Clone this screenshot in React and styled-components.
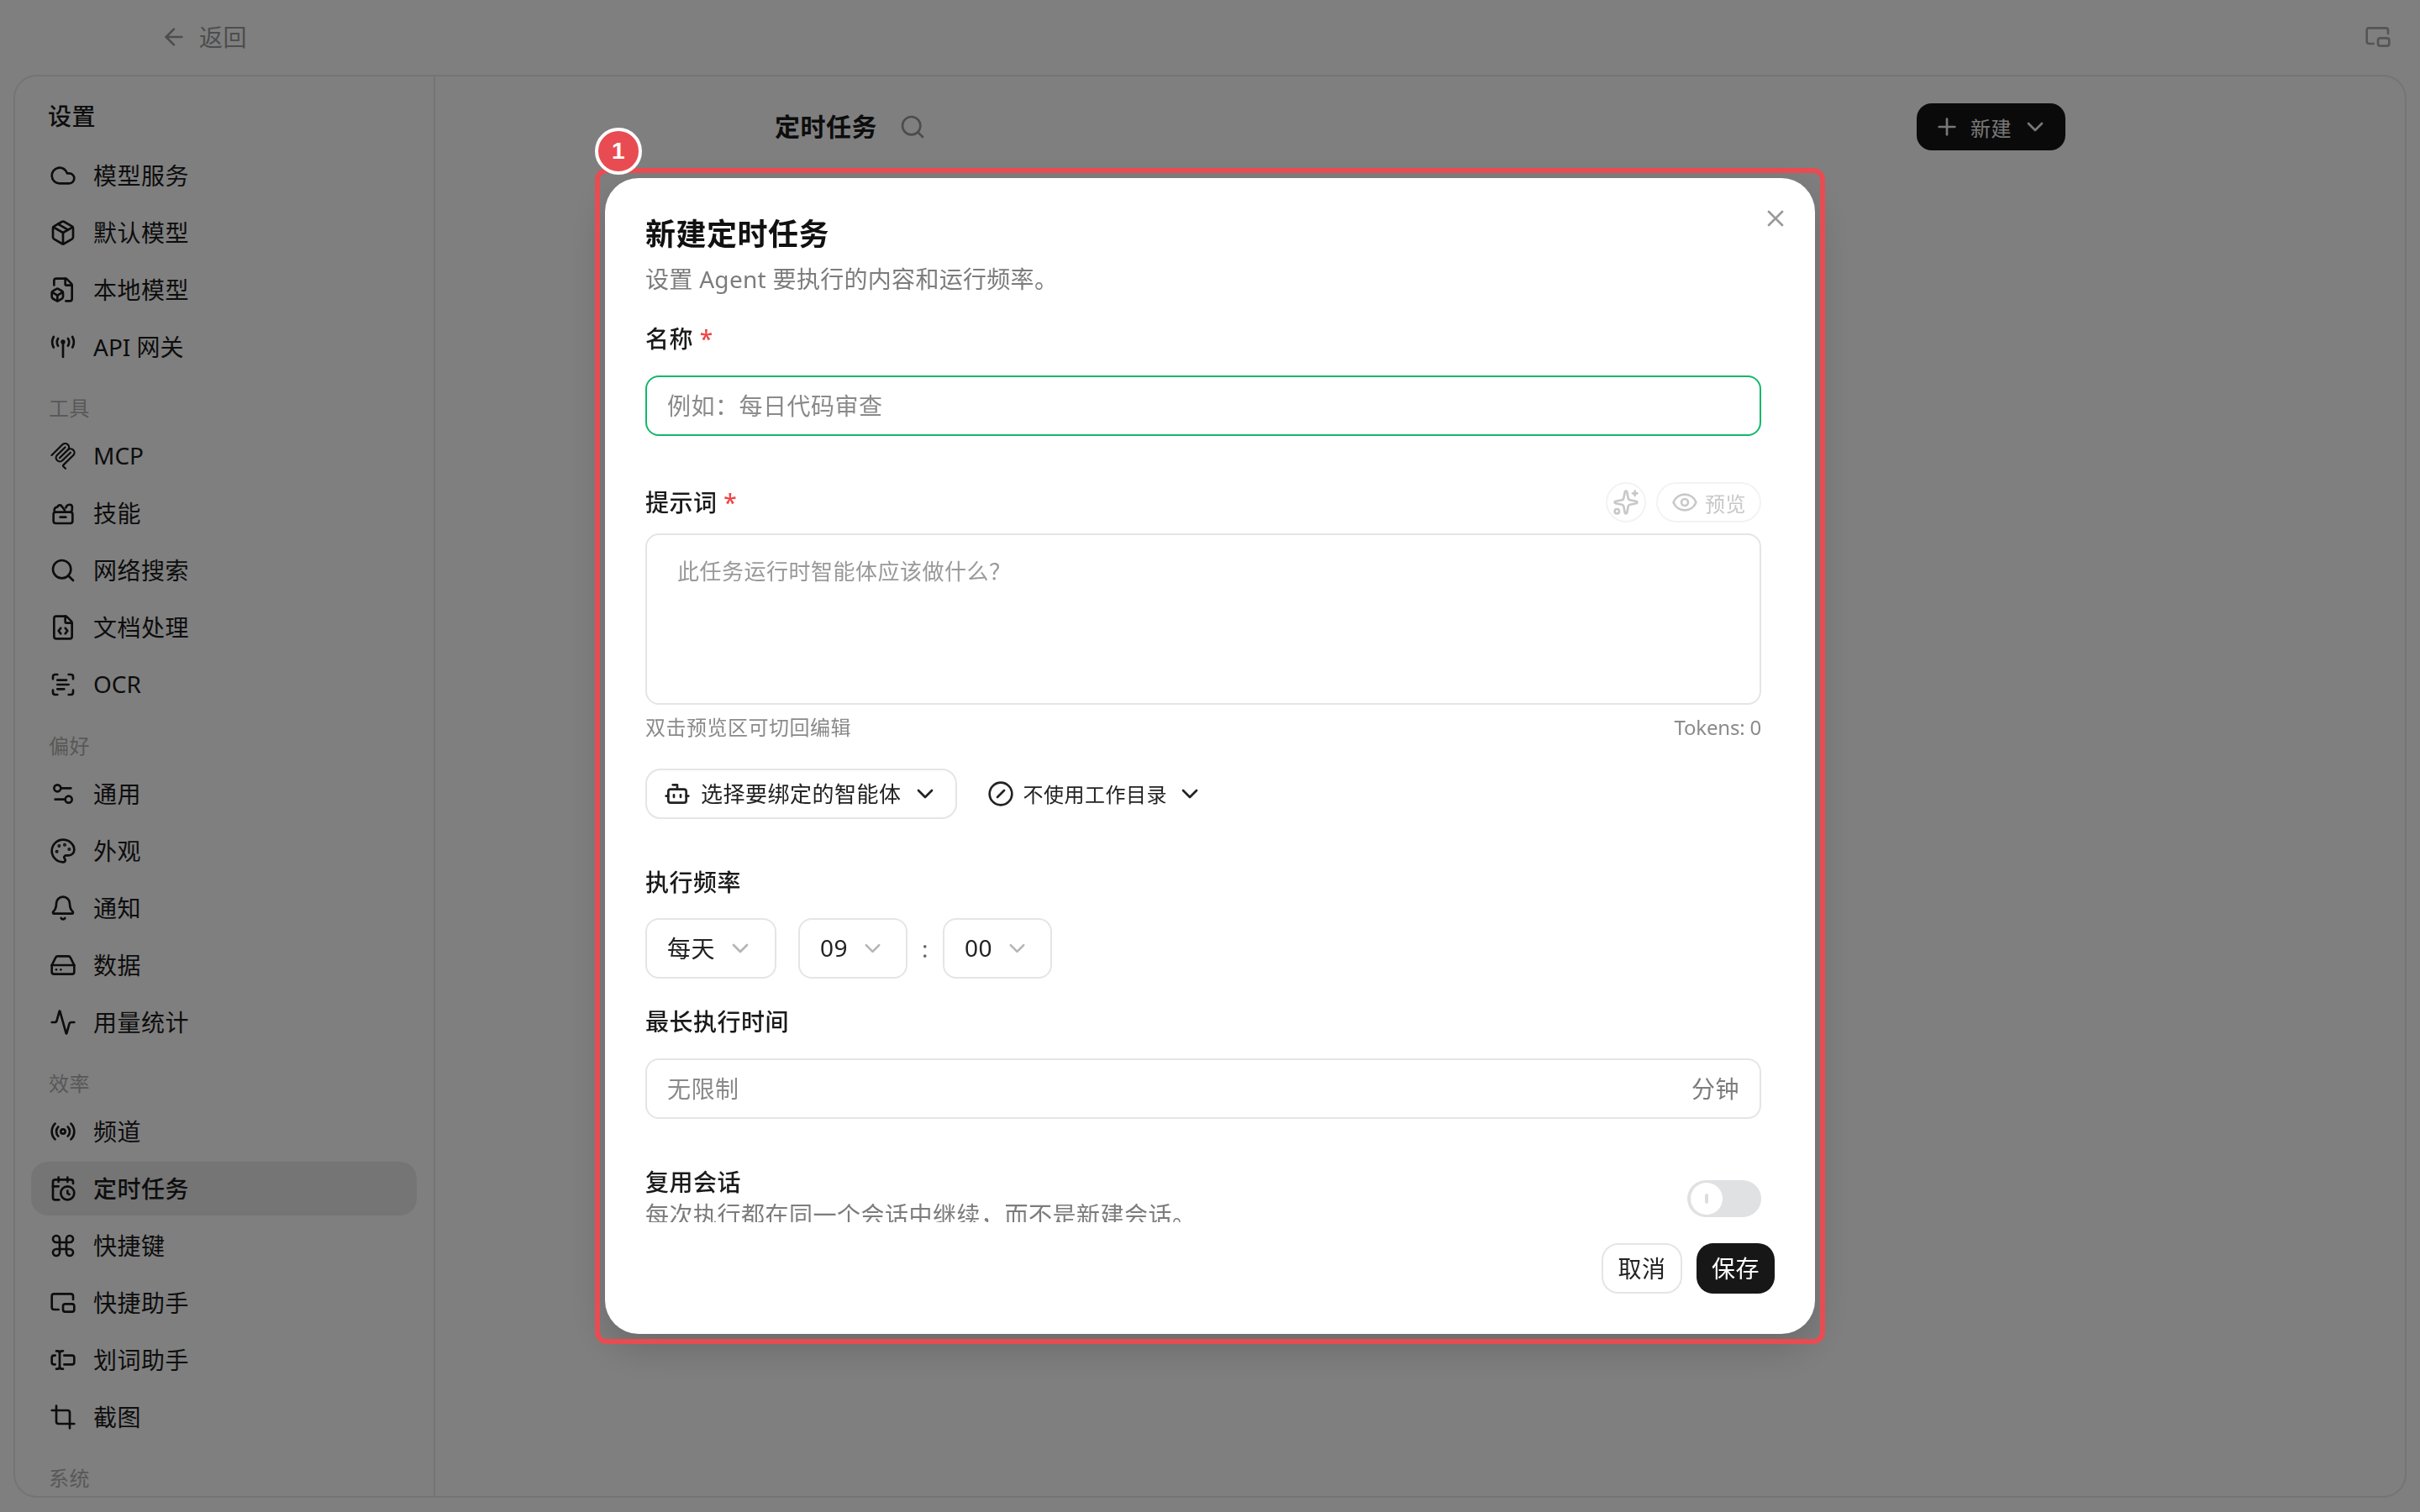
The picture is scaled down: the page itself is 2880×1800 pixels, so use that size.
import { createGlobalStyle, styled } from "styled-components";
import {
    Activity,
    ArrowLeft,
    Bell,
    Bot,
    CalendarClock,
    ChevronDown,
    CircleSlash,
    Cloud,
    Command,
    Crop,
    Eye,
    FileBox,
    FileCode,
    HardDrive,
    Package,
    Palette,
    PictureInPicture2,
    Plus,
    Radio,
    ScanText,
    Search,
    Settings2,
    Sparkles,
    TextCursorInput,
    X,
} from "lucide-react";

const FONT = `"Noto Sans", "Noto Sans CJK SC", sans-serif`;

const GlobalStyle = createGlobalStyle`
    html, body, #root {
        margin: 0;
        height: 100%;
    }
    body {
        font-family: ${FONT};
        letter-spacing: 0.5px;
        background: #fff;
        color: #1a1a1a;
        overflow: hidden;
    }
    * {
        box-sizing: border-box;
    }
`;

const AntennaIcon = (props) => (
    <svg
        viewBox="0 0 24 24"
        fill="none"
        stroke="currentColor"
        strokeWidth="2"
        strokeLinecap="round"
        strokeLinejoin="round"
        {...props}
    >
        <path d="M12 8v13" />
        <circle cx="12" cy="7.5" r="1" fill="currentColor" />
        <path d="M7.6 4.5a6 6 0 0 0 0 6.5" />
        <path d="M16.4 4.5a6 6 0 0 1 0 6.5" />
        <path d="M3.6 3a10 10 0 0 0 0 9.5" />
        <path d="M20.4 3a10 10 0 0 1 0 9.5" />
    </svg>
);

const McpIcon = (props) => (
    <svg viewBox="0 0 24 24" fill="currentColor" {...props}>
        <path d="M15.688 2.343a2.588 2.588 0 00-3.61 0l-9.626 9.44a.863.863 0 01-1.203 0 .823.823 0 010-1.18l9.626-9.44a4.313 4.313 0 016.016 0 4.116 4.116 0 011.204 3.54 4.3 4.3 0 013.609 1.18l.05.05a4.115 4.115 0 010 5.9l-8.706 8.537a.274.274 0 000 .393l1.788 1.754a.823.823 0 010 1.18.863.863 0 01-1.203 0l-1.788-1.753a1.92 1.92 0 010-2.754l8.706-8.538a2.47 2.47 0 000-3.54l-.05-.049a2.588 2.588 0 00-3.607-.003l-7.172 7.034-.002.002-.098.097a.863.863 0 01-1.204 0 .823.823 0 010-1.18l7.273-7.133a2.47 2.47 0 00-.003-3.537z" />
        <path d="M14.485 4.703a.823.823 0 000-1.18.863.863 0 00-1.204 0l-7.119 6.982a4.115 4.115 0 000 5.9 4.314 4.314 0 006.016 0l7.12-6.982a.823.823 0 000-1.18.863.863 0 00-1.204 0l-7.119 6.982a2.588 2.588 0 01-3.61 0 2.47 2.47 0 010-3.54l7.12-6.982z" />
    </svg>
);

const SkillIcon = (props) => (
    <svg
        viewBox="0 0 24 24"
        fill="none"
        stroke="currentColor"
        strokeWidth="2"
        strokeLinecap="round"
        strokeLinejoin="round"
        {...props}
    >
        <rect x="3.5" y="11" width="17" height="10" rx="2" />
        <path d="M9.5 15.5h5" />
        <path d="M4.5 11C3.5 8 5 6.5 7 6.5 7.5 4.5 10 4 11 6c1 1.5 2.5 2 3 5" />
        <path d="M14.5 7c.5-2 2.5-3.2 4.5-2.5 1.5.5 1.5 3.5.5 6.5" />
    </svg>
);

const NAV = [
    {
        items: [
            { icon: Cloud, label: "模型服务" },
            { icon: Package, label: "默认模型" },
            { icon: FileBox, label: "本地模型" },
            { icon: AntennaIcon, label: "API 网关", latin: true },
        ],
    },
    {
        title: "工具",
        items: [
            { icon: McpIcon, label: "MCP", latin: true },
            { icon: SkillIcon, label: "技能" },
            { icon: Search, label: "网络搜索" },
            { icon: FileCode, label: "文档处理" },
            { icon: ScanText, label: "OCR", latin: true },
        ],
    },
    {
        title: "偏好",
        items: [
            { icon: Settings2, label: "通用" },
            { icon: Palette, label: "外观" },
            { icon: Bell, label: "通知" },
            { icon: HardDrive, label: "数据" },
            { icon: Activity, label: "用量统计" },
        ],
    },
    {
        title: "效率",
        items: [
            { icon: Radio, label: "频道" },
            { icon: CalendarClock, label: "定时任务", active: true },
            { icon: Command, label: "快捷键" },
            { icon: PictureInPicture2, label: "快捷助手" },
            { icon: TextCursorInput, label: "划词助手" },
            { icon: Crop, label: "截图" },
        ],
    },
    { title: "系统", items: [] },
];

export default function App() {
    return (
        <>
            <GlobalStyle />
            <Page>
                <TopBar>
                    <BackLink>
                        <ArrowLeft size={32} strokeWidth={2} />
                        返回
                    </BackLink>
                    <PipIcon size={32} strokeWidth={2} />
                </TopBar>
                <Card>
                    <Sidebar>
                        <SidebarTitle>设置</SidebarTitle>
                        {NAV.map((group, i) => (
                            <NavGroup key={i}>
                                {group.title ? <GroupTitle>{group.title}</GroupTitle> : null}
                                {group.items.map((x) => (
                                    <NavItem key={x.label} $active={x.active}>
                                        <x.icon width={32} height={32} size={32} strokeWidth={2} />
                                        <NavLabel $latin={x.latin}>{x.label}</NavLabel>
                                    </NavItem>
                                ))}
                            </NavGroup>
                        ))}
                    </Sidebar>
                    <Main>
                        <MainHeader>
                            <MainTitle>
                                定时任务
                                <Search size={32} color="#999" strokeWidth={2} />
                            </MainTitle>
                            <NewButton>
                                <Plus size={32} strokeWidth={2} />
                                新建
                                <ChevronDown size={32} strokeWidth={2} />
                            </NewButton>
                        </MainHeader>
                    </Main>
                </Card>

                <Overlay>
                    <Dialog>
                        <Highlight />
                        <Badge>1</Badge>
                        <CloseButton>
                            <X size={32} strokeWidth={2} />
                        </CloseButton>
                        <DialogTitle>新建定时任务</DialogTitle>
                        <DialogSub>设置 Agent 要执行的内容和运行频率。</DialogSub>

                        <Form>
                            <Label $top={31}>
                                名称 <Star>*</Star>
                            </Label>
                            <TextField $focused $top={24}>
                                <Placeholder>例如：每日代码审查</Placeholder>
                            </TextField>

                            <PromptHead>
                                <Label>
                                    提示词 <Star>*</Star>
                                </Label>
                                <PromptTools>
                                    <GhostRound>
                                        <Sparkles size={32} strokeWidth={2} />
                                    </GhostRound>
                                    <GhostPill>
                                        <Eye size={32} strokeWidth={2} />
                                        预览
                                    </GhostPill>
                                </PromptTools>
                            </PromptHead>
                            <PromptBox>此任务运行时智能体应该做什么？</PromptBox>
                            <HintRow>
                                <span>双击预览区可切回编辑</span>
                                <TokenCount>Tokens: 0</TokenCount>
                            </HintRow>

                            <BindRow>
                                <AgentButton>
                                    <Bot size={32} strokeWidth={2} />
                                    <BindLabel>选择要绑定的智能体</BindLabel>
                                    <ChevronDown size={32} strokeWidth={2} />
                                </AgentButton>
                                <WorkdirButton>
                                    <CircleSlash size={32} strokeWidth={2} />
                                    <BindLabel>不使用工作目录</BindLabel>
                                    <ChevronDown size={32} strokeWidth={2} />
                                </WorkdirButton>
                            </BindRow>

                            <Label $top={55}>执行频率</Label>
                            <FreqRow>
                                <SelectBox $width={156}>
                                    <SelectValue>每天</SelectValue>
                                    <ChevronDown size={32} strokeWidth={2} color="#b5b5b5" />
                                </SelectBox>
                                <TimeGroup>
                                    <SelectBox $width={130}>
                                        <SelectValue>09</SelectValue>
                                        <ChevronDown size={32} strokeWidth={2} color="#b5b5b5" />
                                    </SelectBox>
                                    <Colon>:</Colon>
                                    <SelectBox $width={130}>
                                        <SelectValue>00</SelectValue>
                                        <ChevronDown size={32} strokeWidth={2} color="#b5b5b5" />
                                    </SelectBox>
                                </TimeGroup>
                            </FreqRow>

                            <Label $top={31}>最长执行时间</Label>
                            <TextField $top={24}>
                                <Placeholder>无限制</Placeholder>
                                <Unit>分钟</Unit>
                            </TextField>

                            <ReuseRow>
                                <div>
                                    <Label>复用会话</Label>
                                    <ReuseHint>每次执行都在同一个会话中继续，而不是新建会话。</ReuseHint>
                                </div>
                                <Toggle>
                                    <ToggleKnob />
                                </Toggle>
                            </ReuseRow>
                        </Form>

                        <Footer>
                            <CancelButton>取消</CancelButton>
                            <SaveButton>保存</SaveButton>
                        </Footer>
                    </Dialog>
                </Overlay>
            </Page>
        </>
    );
}

const Page = styled.div`
    position: relative;
    display: flex;
    flex-direction: column;
    height: 1800px;
    background: #fff;
`;

const TopBar = styled.header`
    display: flex;
    align-items: center;
    justify-content: space-between;
    flex: none;
    height: 89px;
    padding: 0 34px 2px 191px;
    color: #9a9a9a;
`;

const BackLink = styled.div`
    display: flex;
    align-items: center;
    gap: 14px;
    font-size: 28px;
    line-height: 40px;
`;

const PipIcon = styled(PictureInPicture2)`
    color: #aaa;
`;

const Card = styled.div`
    display: flex;
    flex: none;
    height: 1694px;
    margin: 0 16px;
    border: 2px solid #e8e8e8;
    border-radius: 28px;
    overflow: hidden;
`;

const Sidebar = styled.aside`
    flex: none;
    width: 500px;
    padding: 27px 20px 0 19px;
    border-right: 2px solid #e8e8e8;
    overflow: hidden;
`;

const SidebarTitle = styled.h2`
    margin: 0 0 19px 20px;
    font-size: 28px;
    line-height: 40px;
    font-weight: 500;
`;

const NavGroup = styled.nav`
    display: flex;
    flex-direction: column;
    gap: 4px;
`;

const GroupTitle = styled.div`
    margin: 25px 0 5px 21px;
    font-size: 24px;
    line-height: 32px;
    color: #b0b0b0;
`;

const NavItem = styled.div`
    display: flex;
    align-items: center;
    gap: 20px;
    height: 64px;
    padding-left: 22px;
    border-radius: 20px;
    font-size: 28px;
    color: #1a1a1a;
    font-weight: ${(props) => (props.$active ? 500 : 400)};
    background: ${(props) => (props.$active ? "#ebebeb" : "transparent")};
`;

const NavLabel = styled.span`
    margin-top: -2px;
    letter-spacing: ${(props) => (props.$latin ? "0" : "0.5px")};
`;

const Main = styled.main`
    flex: 1;
    padding-top: 32px;
`;

const MainHeader = styled.div`
    display: flex;
    align-items: center;
    justify-content: space-between;
    width: 1536px;
    margin: 0 auto;
`;

const MainTitle = styled.h1`
    display: flex;
    align-items: center;
    gap: 26px;
    margin: 0;
    font-size: 30px;
    font-weight: 700;
    line-height: 40px;
`;

const NewButton = styled.div`
    display: flex;
    align-items: center;
    gap: 12px;
    height: 56px;
    padding: 0 20px;
    border-radius: 18px;
    background: #151515;
    color: #f0f0f0;
    font-size: 24px;
`;

const Overlay = styled.div`
    position: fixed;
    inset: 0;
    display: flex;
    align-items: center;
    justify-content: center;
    background: rgba(0, 0, 0, 0.5);
`;

const Dialog = styled.div`
    position: relative;
    display: flex;
    flex-direction: column;
    width: 1440px;
    height: 1376px;
    padding: 45px 48px 48px;
    border-radius: 40px;
    background: #fff;
    box-shadow: 0 16px 48px rgba(0, 0, 0, 0.18);
`;

const Highlight = styled.div`
    position: absolute;
    inset: -12px;
    border: 6px solid #e84c52;
    border-radius: 14px;
    pointer-events: none;
`;

const Badge = styled.div`
    position: absolute;
    left: -12px;
    top: -60px;
    display: flex;
    align-items: center;
    justify-content: center;
    width: 56px;
    height: 56px;
    border: 4px solid #fff;
    border-radius: 50%;
    background: #e84c52;
    color: #fff;
    font-family: "Liberation Sans", sans-serif;
    font-size: 28px;
    font-weight: 700;
`;

const CloseButton = styled.div`
    position: absolute;
    top: 32px;
    right: 31px;
    display: flex;
    color: #999;
`;

const DialogTitle = styled.h2`
    flex: none;
    margin: 0 0 11px;
    font-size: 36px;
    line-height: 44px;
    font-weight: 600;
    color: #111;
`;

const DialogSub = styled.p`
    flex: none;
    margin: 0;
    font-size: 28px;
    line-height: 40px;
    letter-spacing: 0.3px;
    color: #7c7c7c;
`;

const Form = styled.div`
    display: flex;
    flex-direction: column;
    flex: none;
    height: 1103px;
    padding-right: 16px;
    overflow: hidden;
`;

const Label = styled.div`
    flex: none;
    margin-top: ${(props) => props.$top || 0}px;
    font-size: 28px;
    line-height: 40px;
    font-weight: 500;
    color: #1a1a1a;
`;

const Star = styled.span`
    color: #ef4444;
`;

const TextField = styled.div`
    display: flex;
    align-items: center;
    justify-content: space-between;
    flex: none;
    height: 72px;
    margin-top: ${(props) => props.$top || 0}px;
    padding: 0 24px 3px;
    border: ${(props) => (props.$focused ? "2.5px solid #12b76a" : "2px solid #e5e5e5")};
    border-radius: 16px;
    font-size: 28px;
`;

const Placeholder = styled.span`
    color: #8a8a8a;
`;

const Unit = styled.span`
    color: #7c7c7c;
`;

const PromptHead = styled.div`
    display: flex;
    align-items: center;
    justify-content: space-between;
    flex: none;
    height: 48px;
    margin-top: 55px;
`;

const PromptTools = styled.div`
    display: flex;
    gap: 12px;
    color: #c8c8c8;
`;

const GhostRound = styled.div`
    display: flex;
    align-items: center;
    justify-content: center;
    width: 48px;
    height: 48px;
    border: 2px solid #f3f3f3;
    border-radius: 50%;
`;

const GhostPill = styled.div`
    display: flex;
    align-items: center;
    gap: 8px;
    height: 48px;
    padding: 0 16px;
    border: 2px solid #f3f3f3;
    border-radius: 24px;
    font-size: 24px;
`;

const PromptBox = styled.div`
    flex: none;
    height: 204px;
    margin-top: 13px;
    padding: 23px 36px;
    border: 2px solid #e5e5e5;
    border-radius: 16px;
    font-size: 26px;
    line-height: 40px;
    color: #999;
`;

const HintRow = styled.div`
    display: flex;
    justify-content: space-between;
    flex: none;
    margin-top: 11px;
    font-size: 24px;
    line-height: 32px;
    color: #8a8a8a;
`;

const TokenCount = styled.span`
    letter-spacing: -0.2px;
`;

const BindRow = styled.div`
    display: flex;
    align-items: center;
    gap: 36px;
    flex: none;
    margin-top: 33px;
`;

const BindLabel = styled.span`
    margin-top: -2px;
`;

const AgentButton = styled.div`
    display: flex;
    align-items: center;
    gap: 12px;
    height: 60px;
    padding: 0 20px;
    border: 2px solid #e5e5e5;
    border-radius: 18px;
    font-size: 26px;
    color: #222;
`;

const WorkdirButton = styled.div`
    display: flex;
    align-items: center;
    gap: 11px;
    font-size: 24px;
    color: #222;
`;

const FreqRow = styled.div`
    display: flex;
    gap: 26px;
    flex: none;
    margin-top: 23px;
`;

const TimeGroup = styled.div`
    display: flex;
    align-items: center;
`;

const SelectBox = styled.div`
    display: flex;
    align-items: center;
    gap: 14px;
    width: ${(props) => props.$width}px;
    height: 72px;
    padding: 0 24px;
    border: 2px solid #e5e5e5;
    border-radius: 16px;
    font-size: 28px;
    color: #222;
`;

const SelectValue = styled.span`
    margin-top: -2px;
    white-space: nowrap;
`;

const Colon = styled.span`
    width: 42px;
    text-align: center;
    font-size: 28px;
    color: #666;
`;

const ReuseRow = styled.div`
    display: flex;
    align-items: center;
    justify-content: space-between;
    flex: none;
    margin-top: 55px;
`;

const ReuseHint = styled.div`
    font-size: 28px;
    line-height: 38px;
    white-space: nowrap;
    color: #7c7c7c;
`;

const Toggle = styled.div`
    display: flex;
    align-items: center;
    width: 88px;
    height: 44px;
    margin-top: 1px;
    padding: 3px 4px;
    border-radius: 22px;
    background: #e0e1e3;
`;

const ToggleKnob = styled.div`
    position: relative;
    width: 38px;
    height: 38px;
    border-radius: 50%;
    background: #fff;
    &::after {
        content: "";
        position: absolute;
        left: 17px;
        top: 13px;
        width: 4px;
        height: 12px;
        border-radius: 2px;
        background: #ddd;
    }
`;

const Footer = styled.div`
    display: flex;
    justify-content: flex-end;
    gap: 17px;
    flex: none;
    margin-top: 25px;
`;

const CancelButton = styled.div`
    display: flex;
    align-items: center;
    justify-content: center;
    width: 96px;
    height: 60px;
    padding-bottom: 2px;
    border: 2px solid #e5e5e5;
    border-radius: 20px;
    font-size: 28px;
    color: #222;
`;

const SaveButton = styled.div`
    display: flex;
    align-items: center;
    justify-content: center;
    width: 93px;
    height: 60px;
    padding-bottom: 2px;
    border-radius: 20px;
    background: #171717;
    font-size: 28px;
    color: #fff;
`;
